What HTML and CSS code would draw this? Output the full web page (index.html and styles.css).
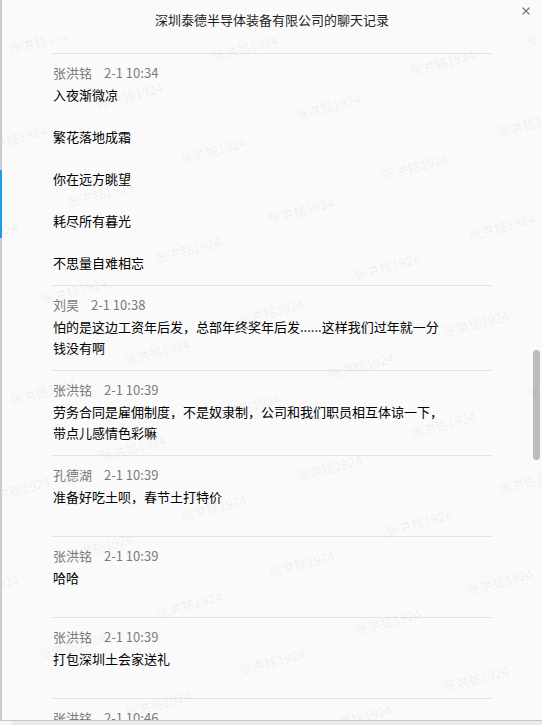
FILE: index.html
```html
<!DOCTYPE html>
<html lang="zh-CN">
<head>
<meta charset="utf-8">
<title>聊天记录</title>
<link rel="stylesheet" href="styles.css">
</head>
<body>
<div class="window">
  <div class="panel">
    <header class="title-bar">
      <span class="spacer"></span>
      <h1 class="title">深圳泰德半导体装备有限公司的聊天记录</h1>
      <button class="close" aria-label="关闭">
        <svg width="8" height="8" viewBox="0 0 8 8"><path d="M0.6 0.6 L7.4 7.4 M7.4 0.6 L0.6 7.4" stroke="#666d76" stroke-width="1.3" fill="none"/></svg>
      </button>
    </header>
    <div class="scroller">
      <ul class="msg-list">
        <li class="msg">
          <div class="meta"><span class="name">张洪铭</span><span class="time">2-1 10:34</span></div>
          <div class="text">入夜渐微凉<br><br>繁花落地成霜<br><br>你在远方眺望<br><br>耗尽所有暮光<br><br>不思量自难相忘</div>
        </li>
        <li class="msg">
          <div class="meta"><span class="name">刘昊</span><span class="time">2-1 10:38</span></div>
          <div class="text">怕的是这边工资年后发，总部年终奖年后发......这样我们过年就一分<br>钱没有啊</div>
        </li>
        <li class="msg">
          <div class="meta"><span class="name">张洪铭</span><span class="time">2-1 10:39</span></div>
          <div class="text">劳务合同是雇佣制度，不是奴隶制，公司和我们职员相互体谅一下，<br>带点儿感情色彩嘛</div>
        </li>
        <li class="msg">
          <div class="meta"><span class="name">孔德湖</span><span class="time">2-1 10:39</span></div>
          <div class="text">准备好吃土呗，春节土打特价</div>
        </li>
        <li class="msg">
          <div class="meta"><span class="name">张洪铭</span><span class="time">2-1 10:39</span></div>
          <div class="text">哈哈</div>
        </li>
        <li class="msg">
          <div class="meta"><span class="name">张洪铭</span><span class="time">2-1 10:39</span></div>
          <div class="text">打包深圳土会家送礼</div>
        </li>
        <li class="msg">
          <div class="meta"><span class="name">张洪铭</span><span class="time">2-1 10:46</span></div>
          <div class="text">&nbsp;</div>
        </li>
      </ul>
    </div>
    <div class="scroll-thumb"></div>
  </div>
  <div class="active-mark"></div>
  <div class="watermarks" aria-hidden="true">
    <span style="left:42px;top:41px">张洪铭1924</span>
    <span style="left:245px;top:48px">张洪铭1924</span>
    <span style="left:442px;top:63px">张洪铭1924</span>
    <span style="left:559px;top:32px">张洪铭1924</span>
    <span style="left:130px;top:96px">张洪铭1924</span>
    <span style="left:328px;top:107px">张洪铭1924</span>
    <span style="left:530px;top:124px">张洪铭1924</span>
    <span style="left:14px;top:139px">张洪铭1924</span>
    <span style="left:213px;top:151px">张洪铭1924</span>
    <span style="left:415px;top:167px">张洪铭1924</span>
    <span style="left:100px;top:194px">张洪铭1924</span>
    <span style="left:301px;top:211px">张洪铭1924</span>
    <span style="left:502px;top:227px">张洪铭1924</span>
    <span style="left:-15px;top:235px">张洪铭1924</span>
    <span style="left:188px;top:250px">张洪铭1924</span>
    <span style="left:387px;top:267px">张洪铭1924</span>
    <span style="left:74px;top:291px">张洪铭1924</span>
    <span style="left:271px;top:312px">张洪铭1924</span>
    <span style="left:476px;top:324px">张洪铭1924</span>
    <span style="left:157px;top:352px">张洪铭1924</span>
    <span style="left:361px;top:366px">张洪铭1924</span>
    <span style="left:560px;top:383px">张洪铭1924</span>
    <span style="left:43px;top:392px">张洪铭1924</span>
    <span style="left:247px;top:407px">张洪铭1924</span>
    <span style="left:443px;top:425px">张洪铭1924</span>
    <span style="left:133px;top:448px">张洪铭1924</span>
    <span style="left:329px;top:468px">张洪铭1924</span>
    <span style="left:531px;top:481px">张洪铭1924</span>
    <span style="left:17px;top:490px">张洪铭1924</span>
    <span style="left:214px;top:508px">张洪铭1924</span>
    <span style="left:419px;top:523px">张洪铭1924</span>
    <span style="left:100px;top:547px">张洪铭1924</span>
    <span style="left:302px;top:564px">张洪铭1924</span>
    <span style="left:500px;top:582px">张洪铭1924</span>
    <span style="left:-14px;top:588px">张洪铭1924</span>
    <span style="left:189px;top:605px">张洪铭1924</span>
    <span style="left:388px;top:622px">张洪铭1924</span>
    <span style="left:72px;top:646px">张洪铭1924</span>
    <span style="left:272px;top:662px">张洪铭1924</span>
    <span style="left:476px;top:679px">张洪铭1924</span>
    <span style="left:158px;top:704px">张洪铭1924</span>
    <span style="left:359px;top:718px">张洪铭1924</span>
  </div>
  <div class="bottom-strip"></div>
</div>
</body>
</html>
```

FILE: styles.css
```css
* {
  box-sizing: border-box;
}

html,
body {
  margin: 0;
  padding: 0;
  background: #eeeeee;
}

body {
  font-family: "Noto Sans CJK SC", "Noto Sans", sans-serif;
  font-size: 13px;
  color: #000000;
}

.window {
  position: relative;
  width: 542px;
  height: 725px;
  overflow: hidden;
  display: flex;
  flex-direction: column;
}

.panel {
  position: relative;
  height: 721px;
  flex: none;
  display: flex;
  flex-direction: column;
  background: #fafafa;
  border-left: 2px solid #cbcbd0;
  border-bottom: 1px solid #c8c8cb;
  overflow: hidden;
}

.title-bar {
  height: 53px;
  flex: none;
  display: grid;
  grid-template-columns: 1fr auto 1fr;
  align-items: start;
}

.title {
  margin: 0;
  padding-top: 11px;
  font-size: 13px;
  font-weight: normal;
  line-height: 18px;
  color: #1e1e1e;
  white-space: nowrap;
}

.close {
  justify-self: end;
  margin: 7px 12px 0 0;
  padding: 0;
  width: 8px;
  height: 8px;
  border: 0;
  background: none;
  display: block;
  line-height: 0;
}

.close svg {
  display: block;
}

.scroller {
  flex: 1;
  min-height: 0;
  overflow: hidden;
}

.msg-list {
  list-style: none;
  margin: 0 auto;
  padding: 0;
  width: 440px;
}

.msg {
  border-top: 1px solid #e4e4e4;
  padding: 9px 1px 12px;
}

.meta {
  display: flex;
  line-height: 20px;
  color: #7a7a7a;
  white-space: nowrap;
}

.time {
  margin-left: 12px;
}

.text {
  margin-top: 1px;
  line-height: 21px;
  min-height: 38px;
  color: #000000;
  white-space: nowrap;
}

.scroll-thumb {
  position: absolute;
  right: 2px;
  top: 350px;
  width: 7px;
  height: 110px;
  border-radius: 4px;
  background: #bcbcc0;
}

.active-mark {
  position: absolute;
  left: 0;
  top: 170px;
  width: 2px;
  height: 68px;
  background: #1d9be8;
}

.watermarks {
  position: absolute;
  left: 0;
  top: 0;
  width: 542px;
  height: 720px;
  pointer-events: none;
  clip-path: inset(37px 0 0 2px);
}

.watermarks span {
  position: absolute;
  transform: translate(-50%, -50%) rotate(-15deg);
  font-size: 13px;
  line-height: 14px;
  white-space: nowrap;
  color: rgba(0, 0, 0, 0.065);
}

.bottom-strip {
  flex: 1;
  background: linear-gradient(to right, #f6f6f6 0, #f6f6f6 12px, #ececec 12px);
}
```
